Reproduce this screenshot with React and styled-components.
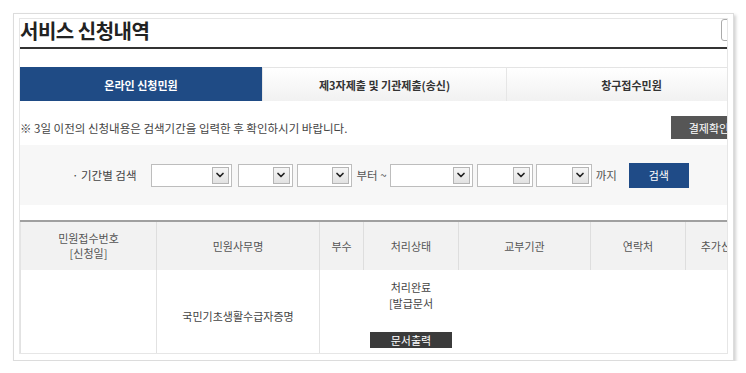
import React from 'react';
import styled, { createGlobalStyle } from 'styled-components';
import { ChevronDown } from 'lucide-react';

const GlobalStyle = createGlobalStyle`
    body {
        margin: 0;
        background: #ffffff;
        font-family: "Noto Sans CJK KR", "Noto Sans", sans-serif;
        color: #444;
    }
`;

const Page = styled.div`
    padding: 13px 0 0 13px;
`;

const Card = styled.div`
    box-sizing: border-box;
    width: 721px;
    height: 348px;
    padding: 4px 5px 6px 5px;
    border: 1px solid #dcdcdc;
    background: #fff;
    box-shadow: 2px 2px 3px rgba(0, 0, 0, 0.18);
`;

const Viewport = styled.div`
    width: 707px;
    height: 334px;
    border: 1px solid #e6e6e6;
    overflow: hidden;
`;

const Content = styled.div`
    width: 736px;
`;

const TitleRow = styled.div`
    height: 28px;
    display: flex;
    justify-content: space-between;
    align-items: flex-start;
    border-bottom: 2px solid #333;
`;

const Title = styled.h2`
    margin: 0;
    font-size: 20px;
    line-height: 24px;
    font-weight: 700;
    color: #222;
    letter-spacing: -0.5px;
`;

const MiniInput = styled.div`
    width: 30px;
    height: 20px;
    margin-right: 3px;
    border: 1px solid #aaa;
    border-radius: 3px;
`;

const Tabs = styled.div`
    margin-top: 18px;
    display: grid;
    grid-template-columns: 242px 244px 1fr;
    height: 34px;
`;

const Tab = styled.div`
    display: flex;
    align-items: center;
    justify-content: center;
    font-size: 11px;
    font-weight: 700;
    color: ${p => (p.$active ? '#fff' : '#333')};
    background: ${p => (p.$active ? '#1f4b85' : 'linear-gradient(#ffffff, #f1f1f1)')};
    border-top: 1px solid ${p => (p.$active ? '#1f4b85' : '#e4e4e4')};
    border-left: ${p => (p.$active ? 'none' : '1px solid #e6e6e6')};
`;

const NoticeRow = styled.div`
    margin-top: 15px;
    height: 23px;
    display: flex;
    align-items: center;
    justify-content: space-between;
    padding-right: 9px;
`;

const Notice = styled.p`
    margin: 0;
    font-size: 11.5px;
    color: #444;
`;

const DarkButton = styled.button`
    width: ${p => p.$w}px;
    height: ${p => p.$h}px;
    border: none;
    padding: 0;
    background: ${p => p.$bg};
    color: #fff;
    font-family: inherit;
    font-size: 11px;
`;

const SearchBox = styled.div`
    margin-top: 6px;
    height: 60px;
    background: #f7f7f7;
    display: flex;
    align-items: center;
    padding-left: 52px;
`;

const Label = styled.span`
    font-size: 11.5px;
    color: #444;
    margin-right: 14px;
`;

const Select = styled.div`
    box-sizing: border-box;
    width: ${p => p.$w}px;
    height: 23px;
    margin-right: ${p => p.$mr}px;
    border: 1px solid #bdbdbd;
    background: #fff;
    display: flex;
    align-items: center;
    justify-content: flex-end;
    padding-right: 2px;
`;

const Arrow = styled.span`
    box-sizing: border-box;
    width: 17px;
    height: 17px;
    border: 1px solid #b5b5b5;
    background: linear-gradient(#f6f6f6, #e2e2e2);
    display: flex;
    align-items: center;
    justify-content: center;
    color: #222;
`;

const Word = styled.span`
    font-size: 11.5px;
    color: #555;
    margin: 0 ${p => p.$mr}px 0 ${p => p.$ml}px;
`;

const Table = styled.table`
    margin-top: 15px;
    width: 736px;
    border-collapse: collapse;
    table-layout: fixed;
    border-top: 2px solid #a0a0a0;
`;

const Th = styled.th`
    height: 48px;
    padding: 0;
    background: #f2f2f2;
    font-size: 11px;
    font-weight: 400;
    line-height: 15px;
    color: #555;
    border-left: 1px solid #dedede;
    &:first-child {
        border-left: 1px solid #e4e4e4;
    }
`;

const Td = styled.td`
    height: 92px;
    padding: 0;
    text-align: center;
    vertical-align: ${p => (p.$top ? 'top' : 'middle')};
    font-size: 11px;
    line-height: 16px;
    color: #444;
    border-left: ${p => (p.$line ? '1px solid #e2e2e2' : 'none')};
`;

const Status = styled.div`
    padding-top: 9px;
    display: flex;
    flex-direction: column;
    align-items: center;
    & > button {
        margin-top: 21px;
    }
`;

const DateSelect = ({ w, mr }) => (
    <Select $w={w} $mr={mr}>
        <Arrow>
            <ChevronDown size={12} strokeWidth={3.5} />
        </Arrow>
    </Select>
);

export default function App() {
    return (
        <Page>
            <GlobalStyle />
            <Card>
                <Viewport>
                    <Content>
                        <TitleRow>
                            <Title>서비스 신청내역</Title>
                            <MiniInput />
                        </TitleRow>
                        <Tabs>
                            <Tab $active>온라인 신청민원</Tab>
                            <Tab>제3자제출 및 기관제출(송신)</Tab>
                            <Tab>창구접수민원</Tab>
                        </Tabs>
                        <NoticeRow>
                            <Notice>※ 3일 이전의 신청내용은 검색기간을 입력한 후 확인하시기 바랍니다.</Notice>
                            <DarkButton $w={76} $h={23} $bg="#565656">결제확인</DarkButton>
                        </NoticeRow>
                        <SearchBox>
                            <Label>· 기간별 검색</Label>
                            <DateSelect w={81} mr={6} />
                            <DateSelect w={55} mr={4} />
                            <DateSelect w={55} mr={0} />
                            <Word $ml={5} $mr={3}>부터 ~</Word>
                            <DateSelect w={83} mr={4} />
                            <DateSelect w={56} mr={3} />
                            <DateSelect w={56} mr={0} />
                            <Word $ml={4} $mr={12}>까지</Word>
                            <DarkButton $w={60} $h={25} $bg="#1f4b87">검색</DarkButton>
                        </SearchBox>
                        <Table>
                            <colgroup>
                                <col style={{ width: 136 }} />
                                <col style={{ width: 163 }} />
                                <col style={{ width: 44 }} />
                                <col style={{ width: 95 }} />
                                <col style={{ width: 132 }} />
                                <col style={{ width: 95 }} />
                                <col />
                            </colgroup>
                            <thead>
                                <tr>
                                    <Th>민원접수번호<br />[신청일]</Th>
                                    <Th>민원사무명</Th>
                                    <Th>부수</Th>
                                    <Th>처리상태</Th>
                                    <Th>교부기관</Th>
                                    <Th>연락처</Th>
                                    <Th>추가신청</Th>
                                </tr>
                            </thead>
                            <tbody>
                                <tr>
                                    <Td $line />
                                    <Td $line>국민기초생활수급자증명</Td>
                                    <Td $line />
                                    <Td $top>
                                        <Status>
                                            <span>처리완료</span>
                                            <span>[발급문서</span>
                                            <DarkButton $w={82} $h={16} $bg="#3b3b3b">문서출력</DarkButton>
                                        </Status>
                                    </Td>
                                    <Td />
                                    <Td />
                                    <Td />
                                </tr>
                            </tbody>
                        </Table>
                    </Content>
                </Viewport>
            </Card>
        </Page>
    );
}
